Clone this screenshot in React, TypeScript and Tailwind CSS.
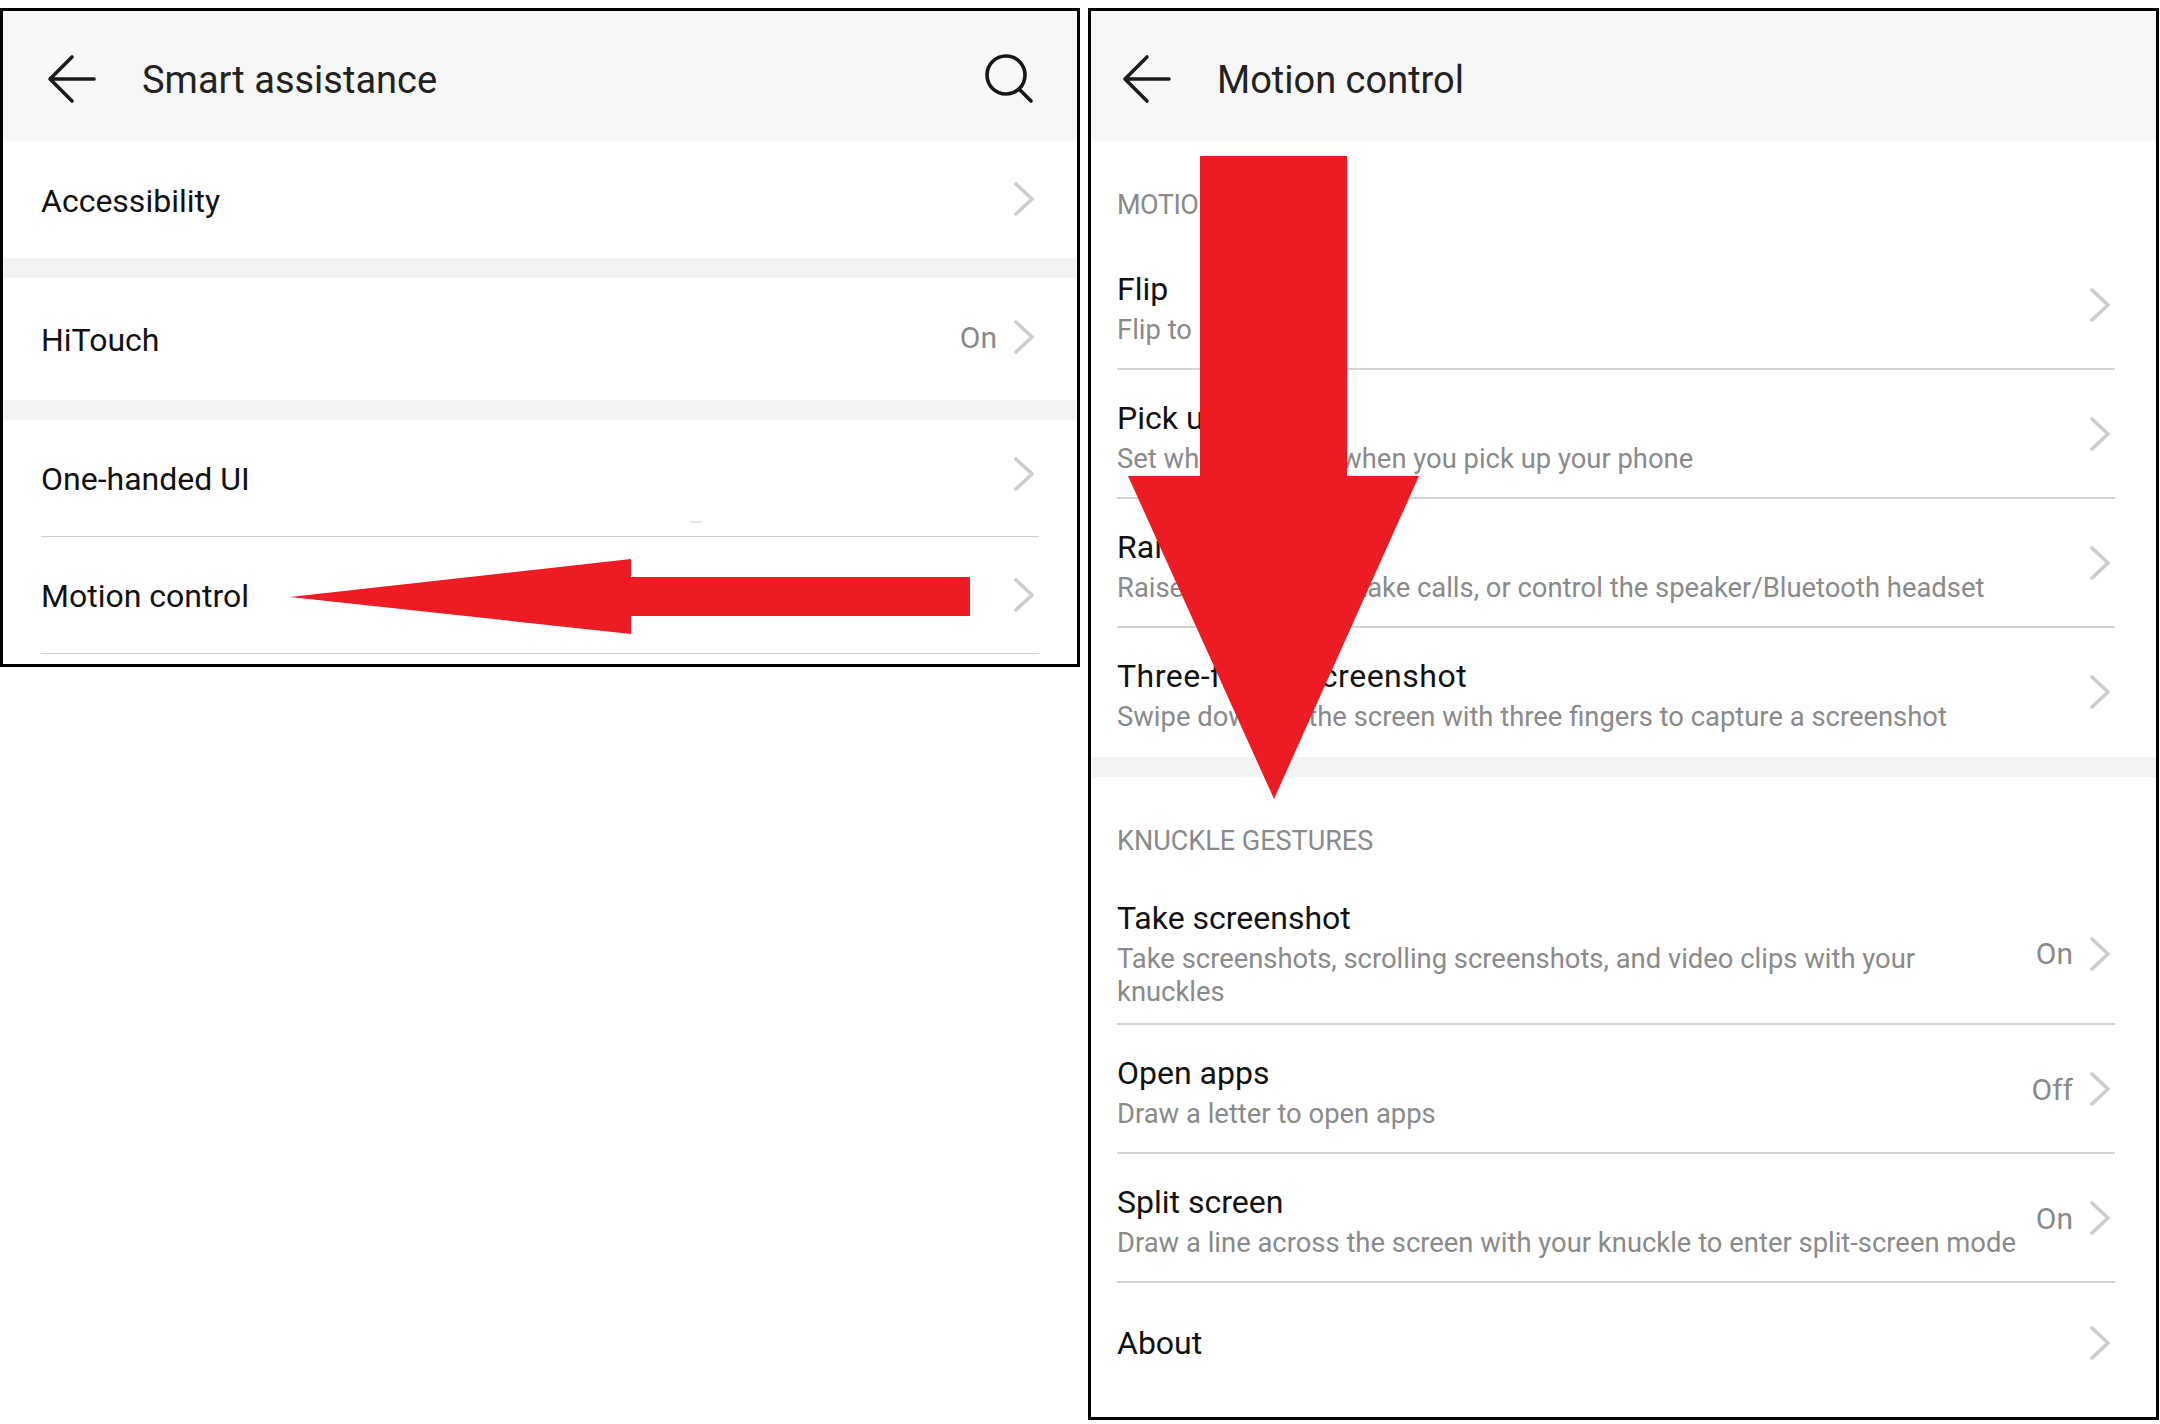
import React from 'react';

const ChevronRight = () => (
  <svg width="22" height="34" viewBox="0 0 22 34" fill="none" className="shrink-0">
    <path d="M3 2 L19 17 L3 32" stroke="#cdcdcd" strokeWidth="3.6" strokeLinecap="round" strokeLinejoin="round" />
  </svg>
);

const BackArrow = () => (
  <svg width="50" height="50" viewBox="0 0 50 50" fill="none" className="shrink-0">
    <path d="M3 25 H47 M25 3 L3 25 L25 47" stroke="#1c1c1c" strokeWidth="3.6" strokeLinecap="round" strokeLinejoin="round" />
  </svg>
);

const SearchIcon = () => (
  <svg width="50" height="50" viewBox="0 0 50 50" fill="none">
    <circle cx="21" cy="21" r="19" stroke="#161616" strokeWidth="3.6" />
    <path d="M34 35 L46 47" stroke="#161616" strokeWidth="3.6" strokeLinecap="round" />
  </svg>
);

interface RowProps {
  title: string;
  sub?: string;
  value?: string;
  divider?: boolean;
  tall?: boolean;
}

const SimpleRow: React.FC<RowProps & { height?: string; chevron?: string }> = ({ title, value, divider, chevron = 'mb-[2px]', height = 'h-[117px]' }) => (
  <div className={`flex items-center justify-between ${height} ${divider ? 'border-b border-[#cfcfcf]' : ''}`}>
    <span className="text-[32px] text-[#111] pt-[2px]">{title}</span>
    <div className={`flex items-center gap-[16px] mr-[4px] ${chevron}`}>
      {value && <span className="text-[30px] text-[#8a8a8a]">{value}</span>}
      <ChevronRight />
    </div>
  </div>
);

const DetailRow: React.FC<RowProps> = ({ title, sub, value, tall }) => (
  <div className={`flex items-center justify-between pt-[28px] border-b-2 border-[#d4d4d4] ${tall ? 'pb-[14px]' : 'pb-[21px]'}`}>
    <div className="w-[900px] shrink-0">
      <div className="text-[32px] leading-[40px] text-[#111]">{title}</div>
      {sub && <div className="text-[27.4px] leading-[33px] text-[#8a8a8a] mt-[5px]">{sub}</div>}
    </div>
    <div className={`flex items-center gap-[16px] mr-[4px] ${tall ? '' : '-mt-[6px]'}`}>
      {value && <span className="text-[30px] text-[#8a8a8a]">{value}</span>}
      <ChevronRight />
    </div>
  </div>
);

const Header: React.FC<{ title: string; action?: React.ReactNode; pad: string }> = ({ title, action, pad }) => (
  <div className={`h-[130px] bg-[#f7f7f7] flex items-center justify-between pt-[6px] ${pad}`}>
    <div className="flex items-center gap-[45px]">
      <BackArrow />
      <span className="text-[38px] text-[#222] pt-[3px]">{title}</span>
    </div>
    {action}
  </div>
);

export default function App() {
  return (
    <div className="relative w-[2160px] h-[1424px] bg-white flex items-start gap-[8px] pt-[8px] overflow-hidden font-['Roboto',sans-serif]">
      {/* left screenshot */}
      <div className="w-[1080px] h-[659px] border-[3px] border-black bg-white shrink-0 overflow-hidden">
        <Header title="Smart assistance" pad="pl-[44px] pr-[42px]" action={<SearchIcon />} />
        <div className="px-[38px]">
          <SimpleRow title="Accessibility" />
        </div>
        <div className="h-[20px] bg-[#f3f3f3]" />
        <div className="px-[38px]">
          <SimpleRow title="HiTouch" value="On" height="h-[122px]" chevron="mb-[4px]" />
        </div>
        <div className="h-[20px] bg-[#f3f3f3]" />
        <div className="px-[38px]">
          <SimpleRow title="One-handed UI" divider chevron="mb-[9px]" />
          <SimpleRow title="Motion control" divider chevron="mb-0" />
        </div>
      </div>

      {/* right screenshot */}
      <div className="w-[1071px] h-[1412px] border-[3px] border-black bg-white shrink-0 overflow-hidden">
        <Header title="Motion control" pad="pl-[31px]" />
        <div className="pl-[26px] pr-[41px]">
          <div className="text-[27px] leading-[33px] text-[#8a8a8a] pt-[48px] pb-[19px] tracking-[-0.5px]">MOTION CONTROL</div>
          <DetailRow title="Flip" sub="Flip to mute" />
          <DetailRow title="Pick up" sub="Set what happens when you pick up your phone" />
          <DetailRow title="Raise to ear" sub="Raise to your ear to take calls, or control the speaker/Bluetooth headset" />
          <div className="flex items-center justify-between pt-[28px] pb-[23px]">
            <div className="w-[900px] shrink-0">
              <div className="text-[32px] leading-[40px] text-[#111] tracking-[0.5px]">Three-finger screenshot</div>
              <div className="text-[27.4px] leading-[33px] text-[#8a8a8a] mt-[5px]">Swipe down on the screen with three fingers to capture a screenshot</div>
            </div>
            <div className="flex items-center mr-[4px] -mt-[6px]">
              <ChevronRight />
            </div>
          </div>
        </div>
        <div className="h-[20px] bg-[#f3f3f3]" />
        <div className="pl-[26px] pr-[41px]">
          <div className="text-[27px] leading-[33px] text-[#8a8a8a] pt-[48px] pb-[12px]">KNUCKLE GESTURES</div>
          <DetailRow title="Take screenshot" sub="Take screenshots, scrolling screenshots, and video clips with your knuckles" value="On" tall />
          <DetailRow title="Open apps" sub="Draw a letter to open apps" value="Off" />
          <DetailRow title="Split screen" sub="Draw a line across the screen with your knuckle to enter split-screen mode" value="On" />
          <div className="flex items-center justify-between h-[120px]">
            <span className="text-[32px] text-[#111]">About</span>
            <div className="mr-[4px]">
              <ChevronRight />
            </div>
          </div>
        </div>
      </div>

      {/* red annotation arrows */}
      <svg width="2160" height="1424" viewBox="0 0 2160 1424" className="absolute inset-0 pointer-events-none">
        <rect x="690" y="521" width="12" height="2" fill="#e6e6e6" />
        <polygon points="290,597 631,559 631,577 970,577 970,616 631,616 631,634" fill="#ed1c24" />
        <polygon points="1200,156 1347,156 1347,476 1419,476 1274,799 1128,476 1200,476" fill="#ed1c24" />
      </svg>
    </div>
  );
}
